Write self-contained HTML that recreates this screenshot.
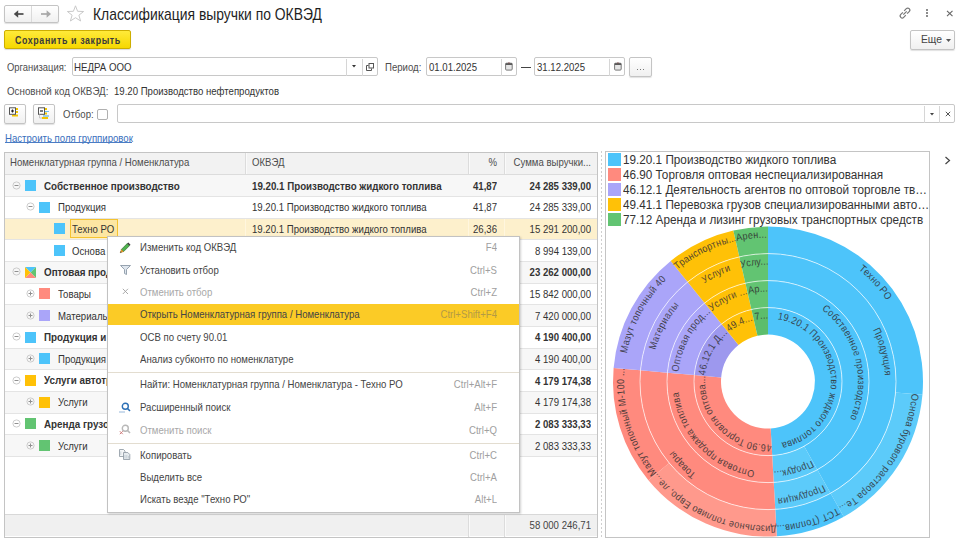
<!DOCTYPE html><html><head><meta charset="utf-8"><style>

*{box-sizing:border-box;margin:0;padding:0}
html,body{width:960px;height:541px;overflow:hidden;background:#fff}
body{position:relative;font-family:"Liberation Sans",sans-serif;font-size:9.6px;color:#333}
.a{position:absolute}
.t{position:absolute;white-space:nowrap;line-height:12px;transform-origin:0 0}
.btn{position:absolute;border:1px solid #c4c4c4;border-radius:2px;background:linear-gradient(#fff,#f0f0f0);box-shadow:0 1px 1px rgba(0,0,0,.12)}
.inp{position:absolute;border:1px solid #c8c8c8;border-radius:2px;background:#fff}
.vl{position:absolute;width:1px;background:#d0d0d0}
.chart{position:absolute;left:605px;top:151px}
.sq{position:absolute}
.exp{position:absolute;width:7px;height:7px;border:1px solid #b8b8b8;border-radius:50%}
.exp:after{content:"";position:absolute;left:1px;top:2px;width:3px;height:1px;background:#999}
.exp.plus:before{content:"";position:absolute;left:2px;top:1px;width:1px;height:3px;background:#999}

</style></head><body>
<div class="btn" style="left:4px;top:4.8px;width:54.8px;height:18.3px"></div>
<div class="vl" style="left:31px;top:6px;height:16px;background:#dadada"></div>
<svg class="a" style="left:12.5px;top:9px" width="12" height="10" viewBox="0 0 12 10"><path d="M4,5H10.5" stroke="#4a4a4a" stroke-width="1.7"/><path d="M0.8,5L5.2,1.2V8.8Z" fill="#4a4a4a"/></svg>
<svg class="a" style="left:39.5px;top:9px" width="12" height="10" viewBox="0 0 12 10"><path d="M1,5H7.5" stroke="#a8a8a8" stroke-width="1.7"/><path d="M11,5L6.6,1.2V8.8Z" fill="#a8a8a8"/></svg>
<svg class="a" style="left:66px;top:5px" width="19" height="17" viewBox="0 0 19 17"><path d="M9.5,0.8L11.6,6.3L17.6,6.5L12.9,10.2L14.6,16L9.5,12.7L4.4,16L6.1,10.2L1.4,6.5L7.4,6.3Z" fill="none" stroke="#c9c9c9" stroke-width="1"/></svg>
<div class="t " style="left:92.60px;top:8.56px;font-size:15.707px;color:#1e1e1e;transform:scaleX(0.8850);">Классификация выручки по ОКВЭД</div>
<svg class="a" style="left:898px;top:6px" width="14" height="14" viewBox="0 0 14 14"><g fill="none" stroke="#777" stroke-width="1.2"><path d="M6.2,4.8L8.3,2.7a2,2 0 0 1 2.9,2.9L9.1,7.7"/><path d="M7.8,9.2L5.7,11.3a2,2 0 0 1 -2.9,-2.9L4.9,6.3"/><path d="M5.3,8.7L8.7,5.3"/></g></svg>
<div class="a" style="left:926.3px;top:9.2px;width:2.2px;height:2.2px;background:#666;border-radius:1px"></div>
<div class="a" style="left:926.3px;top:12.2px;width:2.2px;height:2.2px;background:#666;border-radius:1px"></div>
<div class="a" style="left:926.3px;top:15.2px;width:2.2px;height:2.2px;background:#666;border-radius:1px"></div>
<svg class="a" style="left:946px;top:10px" width="8" height="7" viewBox="0 0 8 7"><path d="M1,0.8L6.5,6.2M6.5,0.8L1,6.2" stroke="#666" stroke-width="1.1"/></svg>
<div class="a" style="left:4px;top:30px;width:127px;height:19px;border:1px solid #cdae00;border-radius:2px;background:linear-gradient(#ffea3a,#f6d800);box-shadow:0 1px 1px rgba(0,0,0,.15)"></div>
<div class="t " style="left:14.60px;top:33.86px;font-size:10.800px;color:#3b3b3b;font-weight:bold;transform:scaleX(0.8200);letter-spacing:0.75px">Сохранить и закрыть</div>
<div class="btn" style="left:910px;top:30px;width:45.2px;height:19.6px"></div>
<div class="t " style="left:920.60px;top:33.11px;font-size:11.804px;color:#444;transform:scaleX(0.8726);">Еще</div>
<svg class="a" style="left:946px;top:39px" width="5" height="3" viewBox="0 0 5 3"><path d="M0,0H5L2.5,3Z" fill="#555"/></svg>
<div class="t " style="left:7.00px;top:60.96px;font-size:10.795px;color:#4d4d4d;transform:scaleX(0.8726);">Организация:</div>
<div class="inp" style="left:71.5px;top:57.4px;width:306px;height:18.8px"></div>
<div class="t " style="left:74.40px;top:60.85px;font-size:11.105px;color:#333;transform:scaleX(0.8726);">НЕДРА ООО</div>
<div class="vl" style="left:346px;top:58.5px;height:17px;background:#d6d6d6"></div>
<div class="vl" style="left:361.5px;top:58.5px;height:17px;background:#d6d6d6"></div>
<svg class="a" style="left:351.6px;top:64.8px" width="4" height="3" viewBox="0 0 4 3"><path d="M0,0H4L2,2.6Z" fill="#333"/></svg>
<svg class="a" style="left:366px;top:62.5px" width="8" height="8" viewBox="0 0 8 8"><g fill="none" stroke="#555" stroke-width="1"><rect x="3" y="0.5" width="4.5" height="4.5"/><path d="M2.5,2.5H0.5V7.5H5.5V5.5"/></g></svg>
<div class="t " style="left:385.20px;top:60.89px;font-size:11.002px;color:#4d4d4d;transform:scaleX(0.8726);">Период:</div>
<div class="inp" style="left:425.8px;top:57.4px;width:90.8px;height:18.8px"></div>
<div class="t " style="left:428.80px;top:60.89px;font-size:11.002px;color:#333;transform:scaleX(0.8726);">01.01.2025</div>
<div class="vl" style="left:500.5px;top:58.5px;height:17px;background:#d6d6d6"></div>
<svg class="a" style="left:504.7px;top:61.6px" width="8" height="9" viewBox="0 0 8 9"><rect x="0.6" y="1.2" width="6.6" height="6.9" rx="1" fill="#e6e6e6" stroke="#6a6a6a" stroke-width="0.9"/><rect x="0.6" y="1.2" width="6.6" height="1.8" fill="#5a5a5a"/><rect x="3.5" y="0.3" width="0.9" height="1.2" fill="#7a3030"/></svg>
<div class="inp" style="left:534.4px;top:57.4px;width:90.8px;height:18.8px"></div>
<div class="t " style="left:537.40px;top:60.89px;font-size:11.002px;color:#333;transform:scaleX(0.8726);">31.12.2025</div>
<div class="vl" style="left:609.3px;top:58.5px;height:17px;background:#d6d6d6"></div>
<svg class="a" style="left:613.5px;top:61.6px" width="8" height="9" viewBox="0 0 8 9"><rect x="0.6" y="1.2" width="6.6" height="6.9" rx="1" fill="#e6e6e6" stroke="#6a6a6a" stroke-width="0.9"/><rect x="0.6" y="1.2" width="6.6" height="1.8" fill="#5a5a5a"/><rect x="3.5" y="0.3" width="0.9" height="1.2" fill="#7a3030"/></svg>
<div class="a" style="left:520.8px;top:67px;width:9.8px;height:1.1px;background:#444"></div>
<div class="btn" style="left:629.2px;top:57.3px;width:22.5px;height:19.4px"></div>
<div class="a" style="left:637px;top:68.5px;width:1px;height:1px;background:#777"></div><div class="a" style="left:640px;top:68.5px;width:1px;height:1px;background:#777"></div><div class="a" style="left:643px;top:68.5px;width:1px;height:1px;background:#777"></div>
<div class="t " style="left:7.00px;top:84.81px;font-size:11.219px;color:#4d4d4d;transform:scaleX(0.8726);">Основной код ОКВЭД:</div>
<div class="t " style="left:113.75px;top:84.89px;font-size:11.002px;color:#333;transform:scaleX(0.8726);">19.20 Производство нефтепродуктов</div>
<div class="btn" style="left:4.3px;top:104.3px;width:21.4px;height:19.5px"></div>
<div class="btn" style="left:33.4px;top:104.3px;width:21.7px;height:19.5px"></div>
<svg class="a" style="left:8px;top:107px" width="14" height="12" viewBox="0 0 14 12"><rect x="4" y="1" width="6" height="2" fill="#f2c500"/><rect x="4" y="4" width="6" height="2" fill="#f2c500"/><rect x="4" y="7.5" width="6" height="2" fill="#f2c500"/><rect x="1.5" y="0.8" width="6" height="6.5" fill="#fff" stroke="#555" stroke-width="1"/><path d="M3,4H6M4.5,2.5V5.5" stroke="#222" stroke-width="1.2"/></svg>
<svg class="a" style="left:37px;top:107px" width="14" height="13" viewBox="0 0 14 13"><rect x="4" y="1" width="6" height="2" fill="#f2c500"/><rect x="6" y="4" width="6" height="1" fill="#6cc0ee"/><rect x="5" y="5.5" width="5" height="2" fill="#f2c500"/><rect x="6" y="8.5" width="6" height="1" fill="#3aa6e0"/><rect x="5" y="10" width="6" height="2" fill="#f2c500"/><rect x="1.5" y="0.8" width="6" height="6.5" fill="#fff" stroke="#555" stroke-width="1"/><path d="M3,4H6" stroke="#222" stroke-width="1.2"/><path d="M2.5,7.5V11H5" stroke="#bbb" stroke-width="0.8" fill="none"/></svg>
<div class="t " style="left:62.90px;top:108.29px;font-size:11.002px;color:#4d4d4d;transform:scaleX(0.8726);">Отбор:</div>
<div class="a" style="left:97.3px;top:109px;width:11px;height:11px;border:1px solid #b0b0b0;border-radius:2px;background:#fff"></div>
<div class="inp" style="left:117px;top:104.4px;width:838px;height:19.1px"></div>
<div class="vl" style="left:924px;top:105.5px;height:17px;background:#d6d6d6"></div>
<div class="vl" style="left:939px;top:105.5px;height:17px;background:#d6d6d6"></div>
<svg class="a" style="left:929.5px;top:112.5px" width="4" height="3" viewBox="0 0 4 3"><path d="M0,0H4L2,2.6Z" fill="#444"/></svg>
<svg class="a" style="left:944.5px;top:111px" width="6" height="6" viewBox="0 0 6 6"><path d="M0.8,0.8L5.2,5.2M5.2,0.8L0.8,5.2" stroke="#555" stroke-width="1"/></svg>
<div class="t " style="left:4.60px;top:131.69px;font-size:11.002px;color:#3a6fbd;transform:scaleX(0.8726);">Настроить поля группировок</div>
<div class="a" style="left:4.6px;top:142px;width:127.8px;height:1px;background:#4a7cc4"></div>
<div class="a" style="left:4px;top:151.5px;width:593.5px;height:386px;border:1px solid #c4c4c4;background:#fff"></div>
<div class="a" style="left:5px;top:152.5px;width:591.5px;height:22.3px;background:#f2f2f2"></div><div class="a" style="left:5px;top:174.33px;width:591.5px;height:1px;background:#dcdcdc"></div>
<div class="vl" style="left:244.5px;top:153px;height:21px;background:#dcdcdc"></div>
<div class="vl" style="left:245.5px;top:153px;height:21px;background:#fafafa"></div>
<div class="vl" style="left:467.5px;top:153px;height:21px;background:#dcdcdc"></div>
<div class="vl" style="left:468.5px;top:153px;height:21px;background:#fafafa"></div>
<div class="vl" style="left:503.5px;top:153px;height:21px;background:#dcdcdc"></div>
<div class="vl" style="left:504.5px;top:153px;height:21px;background:#fafafa"></div>
<div class="t " style="left:10.40px;top:156.29px;font-size:11.002px;color:#4d4d4d;transform:scaleX(0.8726);">Номенклатурная группа / Номенклатура</div>
<div class="t " style="left:251.80px;top:156.29px;font-size:11.002px;color:#4d4d4d;transform:scaleX(0.8726);">ОКВЭД</div>
<div class="t " style="left:97.00px;width:400px;text-align:right;top:156.29px;font-size:11.002px;color:#4d4d4d;transform:scaleX(0.8726);transform-origin:100% 0;">%</div>
<div class="t " style="left:190.50px;width:400px;text-align:right;top:156.29px;font-size:11.002px;color:#4d4d4d;transform:scaleX(0.8726);transform-origin:100% 0;">Сумма выручки...</div>
<div class="a" style="left:5px;top:174.83px;width:591.5px;height:21.66px;background:#f7f7f7"></div>
<div class="a" style="left:5px;top:196.49px;width:591.5px;height:21.66px;background:#fff"></div>
<div class="a" style="left:5px;top:218.15px;width:591.5px;height:21.66px;background:#fdf0cc"></div>
<div class="a" style="left:5px;top:239.81px;width:591.5px;height:21.66px;background:#fff"></div>
<div class="a" style="left:5px;top:261.47px;width:591.5px;height:21.66px;background:#f7f7f7"></div>
<div class="a" style="left:5px;top:283.13px;width:591.5px;height:21.66px;background:#fff"></div>
<div class="a" style="left:5px;top:304.79px;width:591.5px;height:21.66px;background:#f7f7f7"></div>
<div class="a" style="left:5px;top:326.45px;width:591.5px;height:21.66px;background:#fff"></div>
<div class="a" style="left:5px;top:348.11px;width:591.5px;height:21.66px;background:#f7f7f7"></div>
<div class="a" style="left:5px;top:369.77px;width:591.5px;height:21.66px;background:#fff"></div>
<div class="a" style="left:5px;top:391.43px;width:591.5px;height:21.66px;background:#f7f7f7"></div>
<div class="a" style="left:5px;top:413.09px;width:591.5px;height:21.66px;background:#fff"></div>
<div class="a" style="left:5px;top:434.75px;width:591.5px;height:21.66px;background:#f7f7f7"></div>
<div class="a" style="left:5px;top:195.99px;width:591.5px;height:1px;background:#e4e4e4"></div>
<div class="a" style="left:5px;top:217.65px;width:591.5px;height:1px;background:#e4e4e4"></div>
<div class="a" style="left:5px;top:239.31px;width:591.5px;height:1px;background:#e4e4e4"></div>
<div class="a" style="left:5px;top:260.97px;width:591.5px;height:1px;background:#e4e4e4"></div>
<div class="a" style="left:5px;top:282.63px;width:591.5px;height:1px;background:#e4e4e4"></div>
<div class="a" style="left:5px;top:304.29px;width:591.5px;height:1px;background:#e4e4e4"></div>
<div class="a" style="left:5px;top:325.95px;width:591.5px;height:1px;background:#e4e4e4"></div>
<div class="a" style="left:5px;top:347.61px;width:591.5px;height:1px;background:#e4e4e4"></div>
<div class="a" style="left:5px;top:369.27px;width:591.5px;height:1px;background:#e4e4e4"></div>
<div class="a" style="left:5px;top:390.93px;width:591.5px;height:1px;background:#e4e4e4"></div>
<div class="a" style="left:5px;top:412.59px;width:591.5px;height:1px;background:#e4e4e4"></div>
<div class="a" style="left:5px;top:434.25px;width:591.5px;height:1px;background:#e4e4e4"></div>
<div class="a" style="left:5px;top:455.91px;width:591.5px;height:1px;background:#e4e4e4"></div>
<svg class="a" style="left:12px;top:181px" width="9" height="9" viewBox="0 0 9 9"><circle cx="4.5" cy="4.5" r="3.6" fill="none" stroke="#c6c6c6" stroke-width="0.9"/><path d="M2.5,4.5H6.5" stroke="#909090" stroke-width="1"/></svg>
<div class="sq" style="left:25.00px;top:180.16px;width:11px;height:11px;background:#4dc4fa"></div>
<div class="t " style="left:44.30px;top:179.52px;font-size:11.277px;color:#333;font-weight:bold;transform:scaleX(0.8726);">Собственное производство</div>
<div class="t " style="left:252.30px;top:179.56px;font-size:11.162px;color:#333;font-weight:bold;transform:scaleX(0.8726);">19.20.1 Производство жидкого топлива</div>
<div class="t " style="left:97.00px;width:400px;text-align:right;top:179.62px;font-size:11.002px;color:#333;font-weight:bold;transform:scaleX(0.8726);transform-origin:100% 0;">41,87</div>
<div class="t " style="left:190.80px;width:400px;text-align:right;top:179.62px;font-size:11.002px;color:#333;font-weight:bold;transform:scaleX(0.8726);transform-origin:100% 0;">24 285 339,00</div>
<svg class="a" style="left:26px;top:202px" width="9" height="9" viewBox="0 0 9 9"><circle cx="4.5" cy="4.5" r="3.6" fill="none" stroke="#c6c6c6" stroke-width="0.9"/><path d="M2.5,4.5H6.5" stroke="#909090" stroke-width="1"/></svg>
<div class="sq" style="left:39.30px;top:201.82px;width:11px;height:11px;background:#4dc4fa"></div>
<div class="t " style="left:58.30px;top:201.28px;font-size:11.002px;color:#333;transform:scaleX(0.8726);">Продукция</div>
<div class="t " style="left:252.30px;top:201.27px;font-size:11.036px;color:#333;transform:scaleX(0.8726);">19.20.1 Производство жидкого топлива</div>
<div class="t " style="left:97.00px;width:400px;text-align:right;top:201.28px;font-size:11.002px;color:#333;transform:scaleX(0.8726);transform-origin:100% 0;">41,87</div>
<div class="t " style="left:190.80px;width:400px;text-align:right;top:201.28px;font-size:11.002px;color:#333;transform:scaleX(0.8726);transform-origin:100% 0;">24 285 339,00</div>
<div class="vl" style="left:245px;top:218.65px;height:20.66px;background:#fff6de"></div>
<div class="vl" style="left:468px;top:218.65px;height:20.66px;background:#fff6de"></div>
<div class="vl" style="left:504px;top:218.65px;height:20.66px;background:#fff6de"></div>
<div class="sq" style="left:53.60px;top:223.48px;width:11px;height:11px;background:#4dc4fa"></div>
<div class="a" style="left:69.7px;top:218.75px;width:48.8px;height:19.4px;border:1.5px solid #f5c330;background:#fde6a2"></div>
<div class="t " style="left:72.30px;top:222.94px;font-size:11.002px;color:#333;transform:scaleX(0.8726);">Техно РО</div>
<div class="t " style="left:252.30px;top:222.93px;font-size:11.036px;color:#333;transform:scaleX(0.8726);">19.20.1 Производство жидкого топлива</div>
<div class="t " style="left:97.00px;width:400px;text-align:right;top:222.94px;font-size:11.002px;color:#333;transform:scaleX(0.8726);transform-origin:100% 0;">26,36</div>
<div class="t " style="left:190.80px;width:400px;text-align:right;top:222.94px;font-size:11.002px;color:#333;transform:scaleX(0.8726);transform-origin:100% 0;">15 291 200,00</div>
<div class="sq" style="left:53.60px;top:245.14px;width:11px;height:11px;background:#4dc4fa"></div>
<div class="t " style="left:72.30px;top:244.60px;font-size:11.002px;color:#333;transform:scaleX(0.8726);">Основа бурового раствора Техно РО</div>
<div class="t " style="left:252.30px;top:244.59px;font-size:11.036px;color:#333;transform:scaleX(0.8726);">19.20.1 Производство жидкого топлива</div>
<div class="t " style="left:97.00px;width:400px;text-align:right;top:244.60px;font-size:11.002px;color:#333;transform:scaleX(0.8726);transform-origin:100% 0;">15,51</div>
<div class="t " style="left:190.80px;width:400px;text-align:right;top:244.60px;font-size:11.002px;color:#333;transform:scaleX(0.8726);transform-origin:100% 0;">8 994 139,00</div>
<svg class="a" style="left:12px;top:267px" width="9" height="9" viewBox="0 0 9 9"><circle cx="4.5" cy="4.5" r="3.6" fill="none" stroke="#c6c6c6" stroke-width="0.9"/><path d="M2.5,4.5H6.5" stroke="#909090" stroke-width="1"/></svg>
<svg class="a" style="left:25.00px;top:266.80px" width="11" height="11" viewBox="0 0 11 11"><path d="M0,0H11L5.5,5.5Z" fill="#4dc4fa"/><path d="M11,0V11L5.5,5.5Z" fill="#62c472"/><path d="M11,11H0L5.5,5.5Z" fill="#ff8a7e"/><path d="M0,11V0L5.5,5.5Z" fill="#ffc107"/></svg>
<div class="t " style="left:44.30px;top:266.16px;font-size:11.277px;color:#333;font-weight:bold;transform:scaleX(0.8726);">Оптовая продажа топлива</div>
<div class="t " style="left:97.00px;width:400px;text-align:right;top:266.26px;font-size:11.002px;color:#333;font-weight:bold;transform:scaleX(0.8726);transform-origin:100% 0;">40,11</div>
<div class="t " style="left:190.80px;width:400px;text-align:right;top:266.26px;font-size:11.002px;color:#333;font-weight:bold;transform:scaleX(0.8726);transform-origin:100% 0;">23 262 000,00</div>
<svg class="a" style="left:26px;top:289px" width="9" height="9" viewBox="0 0 9 9"><circle cx="4.5" cy="4.5" r="3.6" fill="none" stroke="#c6c6c6" stroke-width="0.9"/><path d="M2.5,4.5H6.5" stroke="#909090" stroke-width="1"/><path d="M4.5,2.5V6.5" stroke="#909090" stroke-width="1"/></svg>
<div class="sq" style="left:39.30px;top:288.46px;width:11px;height:11px;background:#ff8a7e"></div>
<div class="t " style="left:58.30px;top:287.92px;font-size:11.002px;color:#333;transform:scaleX(0.8726);">Товары</div>
<div class="t " style="left:252.30px;top:287.91px;font-size:11.036px;color:#333;transform:scaleX(0.8726);">46.90 Торговля оптовая неспециализированная</div>
<div class="t " style="left:97.00px;width:400px;text-align:right;top:287.92px;font-size:11.002px;color:#333;transform:scaleX(0.8726);transform-origin:100% 0;">27,31</div>
<div class="t " style="left:190.80px;width:400px;text-align:right;top:287.92px;font-size:11.002px;color:#333;transform:scaleX(0.8726);transform-origin:100% 0;">15 842 000,00</div>
<svg class="a" style="left:26px;top:311px" width="9" height="9" viewBox="0 0 9 9"><circle cx="4.5" cy="4.5" r="3.6" fill="none" stroke="#c6c6c6" stroke-width="0.9"/><path d="M2.5,4.5H6.5" stroke="#909090" stroke-width="1"/><path d="M4.5,2.5V6.5" stroke="#909090" stroke-width="1"/></svg>
<div class="sq" style="left:39.30px;top:310.12px;width:11px;height:11px;background:#aaa5f9"></div>
<div class="t " style="left:58.30px;top:309.58px;font-size:11.002px;color:#333;transform:scaleX(0.8726);">Материалы</div>
<div class="t " style="left:252.30px;top:309.57px;font-size:11.036px;color:#333;transform:scaleX(0.8726);">46.12.1 Деятельность агентов</div>
<div class="t " style="left:97.00px;width:400px;text-align:right;top:309.58px;font-size:11.002px;color:#333;transform:scaleX(0.8726);transform-origin:100% 0;">12,79</div>
<div class="t " style="left:190.80px;width:400px;text-align:right;top:309.58px;font-size:11.002px;color:#333;transform:scaleX(0.8726);transform-origin:100% 0;">7 420 000,00</div>
<svg class="a" style="left:12px;top:332px" width="9" height="9" viewBox="0 0 9 9"><circle cx="4.5" cy="4.5" r="3.6" fill="none" stroke="#c6c6c6" stroke-width="0.9"/><path d="M2.5,4.5H6.5" stroke="#909090" stroke-width="1"/></svg>
<div class="sq" style="left:25.00px;top:331.78px;width:11px;height:11px;background:#4dc4fa"></div>
<div class="t " style="left:44.30px;top:331.14px;font-size:11.277px;color:#333;font-weight:bold;transform:scaleX(0.8726);">Продукция и услуги</div>
<div class="t " style="left:252.30px;top:331.18px;font-size:11.162px;color:#333;font-weight:bold;transform:scaleX(0.8726);">19.20.1 Производство жидкого топлива</div>
<div class="t " style="left:97.00px;width:400px;text-align:right;top:331.24px;font-size:11.002px;color:#333;font-weight:bold;transform:scaleX(0.8726);transform-origin:100% 0;">7,22</div>
<div class="t " style="left:190.80px;width:400px;text-align:right;top:331.24px;font-size:11.002px;color:#333;font-weight:bold;transform:scaleX(0.8726);transform-origin:100% 0;">4 190 400,00</div>
<svg class="a" style="left:26px;top:354px" width="9" height="9" viewBox="0 0 9 9"><circle cx="4.5" cy="4.5" r="3.6" fill="none" stroke="#c6c6c6" stroke-width="0.9"/><path d="M2.5,4.5H6.5" stroke="#909090" stroke-width="1"/><path d="M4.5,2.5V6.5" stroke="#909090" stroke-width="1"/></svg>
<div class="sq" style="left:39.30px;top:353.44px;width:11px;height:11px;background:#4dc4fa"></div>
<div class="t " style="left:58.30px;top:352.90px;font-size:11.002px;color:#333;transform:scaleX(0.8726);">Продукция</div>
<div class="t " style="left:252.30px;top:352.89px;font-size:11.036px;color:#333;transform:scaleX(0.8726);">19.20.1 Производство жидкого топлива</div>
<div class="t " style="left:97.00px;width:400px;text-align:right;top:352.90px;font-size:11.002px;color:#333;transform:scaleX(0.8726);transform-origin:100% 0;">7,22</div>
<div class="t " style="left:190.80px;width:400px;text-align:right;top:352.90px;font-size:11.002px;color:#333;transform:scaleX(0.8726);transform-origin:100% 0;">4 190 400,00</div>
<svg class="a" style="left:12px;top:376px" width="9" height="9" viewBox="0 0 9 9"><circle cx="4.5" cy="4.5" r="3.6" fill="none" stroke="#c6c6c6" stroke-width="0.9"/><path d="M2.5,4.5H6.5" stroke="#909090" stroke-width="1"/></svg>
<div class="sq" style="left:25.00px;top:375.10px;width:11px;height:11px;background:#ffc107"></div>
<div class="t " style="left:44.30px;top:374.46px;font-size:11.277px;color:#333;font-weight:bold;transform:scaleX(0.8726);">Услуги автотранспорта</div>
<div class="t " style="left:252.30px;top:374.50px;font-size:11.162px;color:#333;font-weight:bold;transform:scaleX(0.8726);">49.41.1 Перевозка грузов</div>
<div class="t " style="left:97.00px;width:400px;text-align:right;top:374.56px;font-size:11.002px;color:#333;font-weight:bold;transform:scaleX(0.8726);transform-origin:100% 0;">7,21</div>
<div class="t " style="left:190.80px;width:400px;text-align:right;top:374.56px;font-size:11.002px;color:#333;font-weight:bold;transform:scaleX(0.8726);transform-origin:100% 0;">4 179 174,38</div>
<svg class="a" style="left:26px;top:397px" width="9" height="9" viewBox="0 0 9 9"><circle cx="4.5" cy="4.5" r="3.6" fill="none" stroke="#c6c6c6" stroke-width="0.9"/><path d="M2.5,4.5H6.5" stroke="#909090" stroke-width="1"/><path d="M4.5,2.5V6.5" stroke="#909090" stroke-width="1"/></svg>
<div class="sq" style="left:39.30px;top:396.76px;width:11px;height:11px;background:#ffc107"></div>
<div class="t " style="left:58.30px;top:396.22px;font-size:11.002px;color:#333;transform:scaleX(0.8726);">Услуги</div>
<div class="t " style="left:252.30px;top:396.21px;font-size:11.036px;color:#333;transform:scaleX(0.8726);">49.41.1 Перевозка грузов</div>
<div class="t " style="left:97.00px;width:400px;text-align:right;top:396.22px;font-size:11.002px;color:#333;transform:scaleX(0.8726);transform-origin:100% 0;">7,21</div>
<div class="t " style="left:190.80px;width:400px;text-align:right;top:396.22px;font-size:11.002px;color:#333;transform:scaleX(0.8726);transform-origin:100% 0;">4 179 174,38</div>
<svg class="a" style="left:12px;top:419px" width="9" height="9" viewBox="0 0 9 9"><circle cx="4.5" cy="4.5" r="3.6" fill="none" stroke="#c6c6c6" stroke-width="0.9"/><path d="M2.5,4.5H6.5" stroke="#909090" stroke-width="1"/></svg>
<div class="sq" style="left:25.00px;top:418.42px;width:11px;height:11px;background:#62c472"></div>
<div class="t " style="left:44.30px;top:417.78px;font-size:11.277px;color:#333;font-weight:bold;transform:scaleX(0.8726);">Аренда грузового транспорта</div>
<div class="t " style="left:252.30px;top:417.82px;font-size:11.162px;color:#333;font-weight:bold;transform:scaleX(0.8726);">77.12 Аренда и лизинг</div>
<div class="t " style="left:97.00px;width:400px;text-align:right;top:417.88px;font-size:11.002px;color:#333;font-weight:bold;transform:scaleX(0.8726);transform-origin:100% 0;">3,59</div>
<div class="t " style="left:190.80px;width:400px;text-align:right;top:417.88px;font-size:11.002px;color:#333;font-weight:bold;transform:scaleX(0.8726);transform-origin:100% 0;">2 083 333,33</div>
<svg class="a" style="left:26px;top:441px" width="9" height="9" viewBox="0 0 9 9"><circle cx="4.5" cy="4.5" r="3.6" fill="none" stroke="#c6c6c6" stroke-width="0.9"/><path d="M2.5,4.5H6.5" stroke="#909090" stroke-width="1"/><path d="M4.5,2.5V6.5" stroke="#909090" stroke-width="1"/></svg>
<div class="sq" style="left:39.30px;top:440.08px;width:11px;height:11px;background:#62c472"></div>
<div class="t " style="left:58.30px;top:439.54px;font-size:11.002px;color:#333;transform:scaleX(0.8726);">Услуги</div>
<div class="t " style="left:252.30px;top:439.53px;font-size:11.036px;color:#333;transform:scaleX(0.8726);">77.12 Аренда и лизинг</div>
<div class="t " style="left:97.00px;width:400px;text-align:right;top:439.54px;font-size:11.002px;color:#333;transform:scaleX(0.8726);transform-origin:100% 0;">3,59</div>
<div class="t " style="left:190.80px;width:400px;text-align:right;top:439.54px;font-size:11.002px;color:#333;transform:scaleX(0.8726);transform-origin:100% 0;">2 083 333,33</div>
<div class="a" style="left:5px;top:514px;width:591.5px;height:22.3px;background:#f0f0f0;border-top:1px solid #d8d8d8"></div>
<div class="vl" style="left:467.5px;top:515px;height:21.5px;background:#dcdcdc"></div>
<div class="vl" style="left:468.5px;top:515px;height:21.5px;background:#fafafa"></div>
<div class="vl" style="left:503.5px;top:515px;height:21.5px;background:#dcdcdc"></div>
<div class="vl" style="left:504.5px;top:515px;height:21.5px;background:#fafafa"></div>
<div class="t " style="left:191.00px;width:400px;text-align:right;top:518.99px;font-size:11.002px;color:#444;transform:scaleX(0.8726);transform-origin:100% 0;">58 000 246,71</div>
<div class="a" style="left:601px;top:151px;width:1px;height:387px;background-image:linear-gradient(#cfcfcf 50%,transparent 50%);background-size:1px 4px"></div>
<div class="a" style="left:605.2px;top:151.1px;width:324.5px;height:386.7px;border:1px solid #c4c4c4;background:#fff"></div>
<svg class="chart" width="325" height="387" viewBox="605 151 325 387"><path d="M768.00,307.60A74,74 0 0 1 772.20,455.48L770.67,428.52A47,47 0 0 0 768.00,334.60Z" fill="#4dc4fa"/><path d="M772.20,455.48A74,74 0 0 1 694.29,375.05L721.18,377.44A47,47 0 0 0 770.67,428.52Z" fill="#ff8a7e"/><path d="M694.29,375.05A74,74 0 0 1 721.56,323.99L738.50,345.01A47,47 0 0 0 721.18,377.44Z" fill="#9d98ee"/><path d="M721.56,323.99A74,74 0 0 1 751.44,309.48L757.48,335.79A47,47 0 0 0 738.50,345.01Z" fill="#ffc107"/><path d="M751.44,309.48A74,74 0 0 1 768.00,307.60L768.00,334.60A47,47 0 0 0 757.48,335.79Z" fill="#5cbd6c"/><path d="M768.00,280.60A101,101 0 0 1 817.37,469.71L804.17,446.16A74,74 0 0 0 768.00,307.60Z" fill="#4dc4fa"/><path d="M817.37,469.71A101,101 0 0 1 773.73,482.44L772.20,455.48A74,74 0 0 0 804.17,446.16Z" fill="#5ccbfa"/><path d="M773.73,482.44A101,101 0 0 1 667.40,372.67L694.29,375.05A74,74 0 0 0 772.20,455.48Z" fill="#ff8a7e"/><path d="M667.40,372.67A101,101 0 0 1 704.62,302.96L721.56,323.99A74,74 0 0 0 694.29,375.05Z" fill="#aaa5f9"/><path d="M704.62,302.96A101,101 0 0 1 745.40,283.16L751.44,309.48A74,74 0 0 0 721.56,323.99Z" fill="#ffc107"/><path d="M745.40,283.16A101,101 0 0 1 768.00,280.60L768.00,307.60A74,74 0 0 0 751.44,309.48Z" fill="#62c472"/><path d="M768.00,253.60A128,128 0 0 1 830.57,493.26L817.37,469.71A101,101 0 0 0 768.00,280.60Z" fill="#4dc4fa"/><path d="M830.57,493.26A128,128 0 0 1 775.27,509.39L773.73,482.44A101,101 0 0 0 817.37,469.71Z" fill="#5ccbfa"/><path d="M775.27,509.39A128,128 0 0 1 640.50,370.28L667.40,372.67A101,101 0 0 0 773.73,482.44Z" fill="#ff8a7e"/><path d="M640.50,370.28A128,128 0 0 1 687.67,281.94L704.62,302.96A101,101 0 0 0 667.40,372.67Z" fill="#aaa5f9"/><path d="M687.67,281.94A128,128 0 0 1 739.36,256.85L745.40,283.16A101,101 0 0 0 704.62,302.96Z" fill="#ffc107"/><path d="M739.36,256.85A128,128 0 0 1 768.00,253.60L768.00,280.60A101,101 0 0 0 745.40,283.16Z" fill="#62c472"/><path d="M768.00,226.60A155,155 0 0 1 922.43,394.87L895.53,392.56A128,128 0 0 0 768.00,253.60Z" fill="#4dc4fa"/><path d="M922.43,394.87A155,155 0 0 1 843.77,516.82L830.57,493.26A128,128 0 0 0 895.53,392.56Z" fill="#5ccbfa"/><path d="M843.77,516.82A155,155 0 0 1 776.80,536.35L775.27,509.39A128,128 0 0 0 830.57,493.26Z" fill="#4dc4fa"/><path d="M776.80,536.35A155,155 0 0 1 648.40,480.19L669.23,463.02A128,128 0 0 0 775.27,509.39Z" fill="#ff998c"/><path d="M648.40,480.19A155,155 0 0 1 613.61,367.89L640.50,370.28A128,128 0 0 0 669.23,463.02Z" fill="#ff8a7e"/><path d="M613.61,367.89A155,155 0 0 1 670.73,260.92L687.67,281.94A128,128 0 0 0 640.50,370.28Z" fill="#aaa5f9"/><path d="M670.73,260.92A155,155 0 0 1 733.31,230.53L739.36,256.85A128,128 0 0 0 687.67,281.94Z" fill="#ffc107"/><path d="M733.31,230.53A155,155 0 0 1 768.00,226.60L768.00,253.60A128,128 0 0 0 739.36,256.85Z" fill="#62c472"/><circle cx="768" cy="381.6" r="74" fill="none" stroke="#fff" stroke-width="1" stroke-opacity="0.65"/><circle cx="768" cy="381.6" r="101" fill="none" stroke="#fff" stroke-width="1" stroke-opacity="0.65"/><circle cx="768" cy="381.6" r="128" fill="none" stroke="#fff" stroke-width="1" stroke-opacity="0.65"/><g fill="#333" font-family="Liberation Sans, sans-serif" font-size="10.200" text-anchor="middle"><g stroke="#4dc4fa" stroke-width="0.1"><text transform="translate(779.95,319.79) rotate(10.94) scale(0.8800,1)">1</text><text transform="translate(785.12,321.02) rotate(15.78) scale(0.8800,1)">9</text><text transform="translate(789.00,322.25) rotate(19.47) scale(0.8800,1)">.</text><text transform="translate(792.72,323.70) rotate(23.11) scale(0.8800,1)">2</text><text transform="translate(797.55,326.00) rotate(27.97) scale(0.8800,1)">0</text><text transform="translate(801.06,328.02) rotate(31.66) scale(0.8800,1)">.</text><text transform="translate(804.40,330.22) rotate(35.30) scale(0.8800,1)">1</text><text transform="translate(811.22,335.81) rotate(43.33) scale(0.8800,1)">П</text><text transform="translate(815.49,340.25) rotate(48.92) scale(0.8800,1)">р</text><text transform="translate(818.83,344.42) rotate(53.79) scale(0.8800,1)">о</text><text transform="translate(821.82,348.90) rotate(58.69) scale(0.8800,1)">и</text><text transform="translate(824.20,353.18) rotate(63.14) scale(0.8800,1)">з</text><text transform="translate(826.16,357.43) rotate(67.40) scale(0.8800,1)">в</text><text transform="translate(827.93,362.24) rotate(72.06) scale(0.8800,1)">о</text><text transform="translate(829.36,367.37) rotate(76.91) scale(0.8800,1)">д</text><text transform="translate(830.34,372.55) rotate(81.70) scale(0.8800,1)">с</text><text transform="translate(830.83,377.11) rotate(85.88) scale(0.8800,1)">т</text><text transform="translate(830.98,381.70) rotate(90.41) scale(0.8800,1)">в</text><text transform="translate(830.74,386.83) rotate(95.09) scale(0.8800,1)">о</text><text transform="translate(829.40,395.31) rotate(102.90) scale(0.8800,1)">ж</text><text transform="translate(827.80,401.02) rotate(108.29) scale(0.8800,1)">и</text><text transform="translate(825.85,406.15) rotate(113.29) scale(0.8800,1)">д</text><text transform="translate(823.71,410.63) rotate(117.80) scale(0.8800,1)">к</text><text transform="translate(821.28,414.85) rotate(122.24) scale(0.8800,1)">о</text><text transform="translate(818.85,418.42) rotate(126.16) scale(0.8800,1)">г</text><text transform="translate(816.17,421.82) rotate(130.10) scale(0.8800,1)">о</text><text transform="translate(810.99,427.28) rotate(136.95) scale(0.8800,1)">т</text><text transform="translate(807.34,430.44) rotate(141.34) scale(0.8800,1)">о</text><text transform="translate(803.08,433.56) rotate(146.15) scale(0.8800,1)">п</text><text transform="translate(798.43,436.40) rotate(151.10) scale(0.8800,1)">л</text><text transform="translate(793.55,438.82) rotate(156.06) scale(0.8800,1)">и</text><text transform="translate(788.67,440.75) rotate(160.84) scale(0.8800,1)">в</text><text transform="translate(783.73,442.24) rotate(165.53) scale(0.8800,1)">а</text></g><g stroke="#ff8a7e" stroke-width="0.1"><text transform="translate(768.97,444.59) rotate(179.12) scale(0.8800,1)">4</text><text transform="translate(763.60,444.44) rotate(-175.99) scale(0.8800,1)">6</text><text transform="translate(759.60,444.03) rotate(-172.34) scale(0.8800,1)">.</text><text transform="translate(755.65,443.37) rotate(-168.69) scale(0.8800,1)">9</text><text transform="translate(750.42,442.09) rotate(-163.80) scale(0.8800,1)">0</text><text transform="translate(742.99,439.42) rotate(-156.61) scale(0.8800,1)">Т</text><text transform="translate(738.23,437.12) rotate(-151.80) scale(0.8800,1)">о</text><text transform="translate(733.64,434.40) rotate(-146.95) scale(0.8800,1)">р</text><text transform="translate(730.10,431.92) rotate(-143.02) scale(0.8800,1)">г</text><text transform="translate(726.70,429.17) rotate(-139.04) scale(0.8800,1)">о</text><text transform="translate(723.03,425.71) rotate(-134.45) scale(0.8800,1)">в</text><text transform="translate(719.57,421.89) rotate(-129.78) scale(0.8800,1)">л</text><text transform="translate(716.26,417.54) rotate(-124.80) scale(0.8800,1)">я</text><text transform="translate(712.16,410.78) rotate(-117.60) scale(0.8800,1)">о</text><text transform="translate(709.88,405.93) rotate(-112.73) scale(0.8800,1)">п</text><text transform="translate(708.23,401.52) rotate(-108.45) scale(0.8800,1)">т</text><text transform="translate(706.87,396.87) rotate(-104.05) scale(0.8800,1)">о</text><text transform="translate(705.82,391.78) rotate(-99.31) scale(0.8800,1)">в</text><text transform="translate(705.19,386.64) rotate(-94.61) scale(0.8800,1)">а</text><text transform="translate(705.00,382.62) rotate(-90.94) scale(0.8800,1)">.</text><text transform="translate(705.01,379.94) rotate(-88.50) scale(0.8800,1)">.</text><text transform="translate(705.14,377.26) rotate(-86.06) scale(0.8800,1)">.</text></g><g stroke="#9d98ee" stroke-width="0.1"><text transform="translate(705.55,372.96) rotate(-82.02) scale(0.8800,1)">4</text><text transform="translate(706.53,367.65) rotate(-77.11) scale(0.8800,1)">6</text><text transform="translate(707.54,363.81) rotate(-73.49) scale(0.8800,1)">.</text><text transform="translate(708.81,359.97) rotate(-69.81) scale(0.8800,1)">1</text><text transform="translate(710.88,355.02) rotate(-64.93) scale(0.8800,1)">2</text><text transform="translate(712.65,351.52) rotate(-61.33) scale(0.8800,1)">.</text><text transform="translate(714.64,348.13) rotate(-57.75) scale(0.8800,1)">1</text><text transform="translate(719.75,341.14) rotate(-49.87) scale(0.8800,1)">Д</text><text transform="translate(722.81,337.77) rotate(-45.73) scale(0.8800,1)">.</text><text transform="translate(724.73,335.88) rotate(-43.28) scale(0.8800,1)">.</text><text transform="translate(726.75,334.06) rotate(-40.81) scale(0.8800,1)">.</text></g><g stroke="#ffc107" stroke-width="0.1"><text transform="translate(731.22,330.48) rotate(-35.86) scale(0.8800,1)">4</text><text transform="translate(735.75,327.50) rotate(-30.92) scale(0.8800,1)">9</text><text transform="translate(739.21,325.57) rotate(-27.32) scale(0.8800,1)">.</text><text transform="translate(742.74,323.90) rotate(-23.40) scale(0.8800,1)">4</text><text transform="translate(746.45,322.43) rotate(-19.78) scale(0.8800,1)">.</text><text transform="translate(749.02,321.57) rotate(-17.31) scale(0.8800,1)">.</text><text transform="translate(751.63,320.82) rotate(-14.84) scale(0.8800,1)">.</text></g><g stroke="#5cbd6c" stroke-width="0.1"><text transform="translate(757.67,319.46) rotate(-9.59) scale(0.8800,1)">7</text><text transform="translate(761.55,318.93) rotate(-6.33) scale(0.8800,1)">.</text><text transform="translate(764.15,318.69) rotate(-3.95) scale(0.8800,1)">.</text><text transform="translate(766.81,318.56) rotate(-1.54) scale(0.8800,1)">.</text></g><g stroke="#4dc4fa" stroke-width="0.1"><text transform="translate(824.16,311.53) rotate(38.54) scale(0.8800,1)">С</text><text transform="translate(828.82,315.51) rotate(42.44) scale(0.8800,1)">о</text><text transform="translate(832.71,319.29) rotate(45.90) scale(0.8800,1)">б</text><text transform="translate(836.16,323.06) rotate(49.15) scale(0.8800,1)">с</text><text transform="translate(839.07,326.60) rotate(52.07) scale(0.8800,1)">т</text><text transform="translate(841.87,330.40) rotate(55.07) scale(0.8800,1)">в</text><text transform="translate(844.74,334.78) rotate(58.41) scale(0.8800,1)">е</text><text transform="translate(847.40,339.39) rotate(61.79) scale(0.8800,1)">н</text><text transform="translate(849.74,344.09) rotate(65.14) scale(0.8800,1)">н</text><text transform="translate(851.88,349.09) rotate(68.60) scale(0.8800,1)">о</text><text transform="translate(853.68,354.12) rotate(72.00) scale(0.8800,1)">е</text><text transform="translate(855.74,361.60) rotate(77.28) scale(0.8800,1)">п</text><text transform="translate(856.74,366.73) rotate(80.60) scale(0.8800,1)">р</text><text transform="translate(857.47,372.09) rotate(84.05) scale(0.8800,1)">о</text><text transform="translate(857.86,377.45) rotate(87.47) scale(0.8800,1)">и</text><text transform="translate(857.95,382.29) rotate(90.55) scale(0.8800,1)">з</text><text transform="translate(857.78,387.01) rotate(93.56) scale(0.8800,1)">в</text><text transform="translate(857.31,392.15) rotate(96.84) scale(0.8800,1)">о</text><text transform="translate(856.52,397.41) rotate(100.23) scale(0.8800,1)">д</text><text transform="translate(855.45,402.50) rotate(103.54) scale(0.8800,1)">с</text><text transform="translate(854.25,406.98) rotate(106.50) scale(0.8800,1)">т</text><text transform="translate(852.78,411.48) rotate(109.51) scale(0.8800,1)">в</text><text transform="translate(850.92,416.30) rotate(112.80) scale(0.8800,1)">о</text></g><g stroke="#5ccbfa" stroke-width="0.1"><text transform="translate(808.74,461.91) rotate(153.26) scale(0.8800,1)">П</text><text transform="translate(803.06,464.52) rotate(157.24) scale(0.8800,1)">р</text><text transform="translate(798.18,466.41) rotate(160.57) scale(0.8800,1)">о</text><text transform="translate(793.17,468.01) rotate(163.69) scale(0.8800,1)">д</text><text transform="translate(788.25,469.30) rotate(166.93) scale(0.8800,1)">у</text><text transform="translate(783.85,470.20) rotate(169.80) scale(0.8800,1)">к</text><text transform="translate(780.40,470.76) rotate(172.02) scale(0.8800,1)">.</text><text transform="translate(777.68,471.10) rotate(173.76) scale(0.8800,1)">.</text><text transform="translate(775.05,471.34) rotate(175.45) scale(0.8800,1)">.</text></g><g stroke="#ff8a7e" stroke-width="0.1"><text transform="translate(751.24,469.99) rotate(-169.29) scale(0.8800,1)">О</text><text transform="translate(745.03,468.59) rotate(-165.24) scale(0.8800,1)">п</text><text transform="translate(740.43,467.25) rotate(-162.19) scale(0.8800,1)">т</text><text transform="translate(735.88,465.65) rotate(-159.12) scale(0.8800,1)">о</text><text transform="translate(731.15,463.69) rotate(-155.86) scale(0.8800,1)">в</text><text transform="translate(726.42,461.40) rotate(-152.51) scale(0.8800,1)">а</text><text transform="translate(721.79,458.81) rotate(-149.13) scale(0.8800,1)">я</text><text transform="translate(715.28,454.53) rotate(-144.17) scale(0.8800,1)">п</text><text transform="translate(711.01,451.24) rotate(-140.74) scale(0.8800,1)">р</text><text transform="translate(707.05,447.81) rotate(-137.40) scale(0.8800,1)">о</text><text transform="translate(703.29,444.15) rotate(-133.97) scale(0.8800,1)">д</text><text transform="translate(699.68,440.18) rotate(-130.56) scale(0.8800,1)">а</text><text transform="translate(695.99,435.57) rotate(-126.80) scale(0.8800,1)">ж</text><text transform="translate(692.57,430.67) rotate(-122.99) scale(0.8800,1)">а</text><text transform="translate(688.80,424.29) rotate(-118.27) scale(0.8800,1)">т</text><text transform="translate(686.61,419.94) rotate(-115.17) scale(0.8800,1)">о</text><text transform="translate(684.48,415.05) rotate(-111.78) scale(0.8800,1)">п</text><text transform="translate(682.64,410.01) rotate(-108.36) scale(0.8800,1)">л</text><text transform="translate(681.07,404.74) rotate(-104.86) scale(0.8800,1)">и</text><text transform="translate(679.88,399.64) rotate(-101.52) scale(0.8800,1)">в</text><text transform="translate(678.99,394.55) rotate(-98.23) scale(0.8800,1)">а</text></g><g stroke="#aaa5f9" stroke-width="0.1"><text transform="translate(678.97,368.64) rotate(-81.77) scale(0.8800,1)">О</text><text transform="translate(680.11,362.35) rotate(-77.69) scale(0.8800,1)">п</text><text transform="translate(681.23,357.76) rotate(-74.68) scale(0.8800,1)">т</text><text transform="translate(682.62,353.18) rotate(-71.64) scale(0.8800,1)">о</text><text transform="translate(684.43,348.23) rotate(-68.28) scale(0.8800,1)">в</text><text transform="translate(686.48,343.49) rotate(-64.99) scale(0.8800,1)">а</text><text transform="translate(688.79,338.88) rotate(-61.64) scale(0.8800,1)">я</text><text transform="translate(692.77,332.21) rotate(-56.70) scale(0.8800,1)">п</text><text transform="translate(695.83,327.84) rotate(-53.30) scale(0.8800,1)">р</text><text transform="translate(699.10,323.71) rotate(-49.95) scale(0.8800,1)">о</text><text transform="translate(702.64,319.74) rotate(-46.56) scale(0.8800,1)">д</text><text transform="translate(705.57,316.79) rotate(-43.91) scale(0.8800,1)">.</text><text transform="translate(707.55,314.94) rotate(-42.18) scale(0.8800,1)">.</text><text transform="translate(709.60,313.14) rotate(-40.44) scale(0.8800,1)">.</text></g><g stroke="#ffc107" stroke-width="0.1"><text transform="translate(714.05,309.64) rotate(-37.04) scale(0.8800,1)">У</text><text transform="translate(718.30,306.62) rotate(-33.72) scale(0.8800,1)">с</text><text transform="translate(722.74,303.84) rotate(-30.39) scale(0.8800,1)">л</text><text transform="translate(727.23,301.37) rotate(-27.12) scale(0.8800,1)">у</text><text transform="translate(730.87,299.62) rotate(-24.29) scale(0.8800,1)">г</text><text transform="translate(734.90,297.92) rotate(-21.50) scale(0.8800,1)">и</text><text transform="translate(741.27,295.68) rotate(-17.20) scale(0.8800,1)">.</text><text transform="translate(743.90,294.91) rotate(-15.46) scale(0.8800,1)">.</text><text transform="translate(746.44,294.25) rotate(-13.79) scale(0.8800,1)">.</text></g><g stroke="#62c472" stroke-width="0.1"><text transform="translate(751.63,293.10) rotate(-10.45) scale(0.8800,1)">А</text><text transform="translate(757.34,292.23) rotate(-6.77) scale(0.8800,1)">р</text><text transform="translate(761.22,291.84) rotate(-4.51) scale(0.8800,1)">.</text><text transform="translate(763.85,291.67) rotate(-2.83) scale(0.8800,1)">.</text><text transform="translate(766.52,291.58) rotate(-1.13) scale(0.8800,1)">.</text></g><g stroke="#4dc4fa" stroke-width="0.1"><text transform="translate(874.35,332.75) rotate(65.42) scale(0.8800,1)">П</text><text transform="translate(876.77,338.41) rotate(68.43) scale(0.8800,1)">р</text><text transform="translate(878.58,343.31) rotate(70.98) scale(0.8800,1)">о</text><text transform="translate(880.21,348.44) rotate(73.62) scale(0.8800,1)">д</text><text transform="translate(881.56,353.38) rotate(75.91) scale(0.8800,1)">у</text><text transform="translate(882.55,357.68) rotate(78.07) scale(0.8800,1)">к</text><text transform="translate(883.45,362.42) rotate(80.43) scale(0.8800,1)">ц</text><text transform="translate(884.23,367.85) rotate(83.12) scale(0.8800,1)">и</text><text transform="translate(884.76,373.23) rotate(85.77) scale(0.8800,1)">я</text></g><g stroke="#5ccbfa" stroke-width="0.1"><text transform="translate(820.27,486.33) rotate(153.60) scale(0.8800,1)">П</text><text transform="translate(814.68,488.92) rotate(156.62) scale(0.8800,1)">р</text><text transform="translate(809.86,490.88) rotate(159.17) scale(0.8800,1)">о</text><text transform="translate(804.77,492.68) rotate(161.81) scale(0.8800,1)">д</text><text transform="translate(799.86,494.18) rotate(164.27) scale(0.8800,1)">у</text><text transform="translate(795.60,495.29) rotate(166.42) scale(0.8800,1)">к</text><text transform="translate(790.89,496.33) rotate(168.78) scale(0.8800,1)">ц</text><text transform="translate(785.50,497.27) rotate(171.47) scale(0.8800,1)">и</text><text transform="translate(780.13,497.94) rotate(174.12) scale(0.8800,1)">я</text></g><g stroke="#ff8a7e" stroke-width="0.1"><text transform="translate(694.21,472.37) rotate(-140.96) scale(0.8800,1)">Т</text><text transform="translate(690.20,468.97) rotate(-138.38) scale(0.8800,1)">о</text><text transform="translate(686.46,465.50) rotate(-135.88) scale(0.8800,1)">в</text><text transform="translate(682.93,461.91) rotate(-133.26) scale(0.8800,1)">а</text><text transform="translate(679.42,458.02) rotate(-130.69) scale(0.8800,1)">р</text><text transform="translate(675.55,453.27) rotate(-127.69) scale(0.8800,1)">ы</text></g><g stroke="#aaa5f9" stroke-width="0.1"><text transform="translate(656.38,346.54) rotate(-72.56) scale(0.8800,1)">М</text><text transform="translate(658.59,340.15) rotate(-69.25) scale(0.8800,1)">а</text><text transform="translate(660.36,335.74) rotate(-66.92) scale(0.8800,1)">т</text><text transform="translate(662.33,331.37) rotate(-64.58) scale(0.8800,1)">е</text><text transform="translate(664.67,326.71) rotate(-62.02) scale(0.8800,1)">р</text><text transform="translate(667.27,322.09) rotate(-59.37) scale(0.8800,1)">и</text><text transform="translate(670.13,317.51) rotate(-56.73) scale(0.8800,1)">а</text><text transform="translate(673.21,313.03) rotate(-54.07) scale(0.8800,1)">л</text><text transform="translate(677.03,308.05) rotate(-50.99) scale(0.8800,1)">ы</text></g><g stroke="#ffc107" stroke-width="0.1"><text transform="translate(706.73,281.93) rotate(-31.61) scale(0.8800,1)">У</text><text transform="translate(711.17,279.33) rotate(-29.08) scale(0.8800,1)">с</text><text transform="translate(715.76,276.91) rotate(-26.54) scale(0.8800,1)">л</text><text transform="translate(720.35,274.73) rotate(-24.22) scale(0.8800,1)">у</text><text transform="translate(724.11,273.11) rotate(-22.21) scale(0.8800,1)">г</text><text transform="translate(728.24,271.51) rotate(-20.04) scale(0.8800,1)">и</text></g><g stroke="#62c472" stroke-width="0.1"><text transform="translate(743.84,267.08) rotate(-11.74) scale(0.8800,1)">У</text><text transform="translate(748.91,266.15) rotate(-9.21) scale(0.8800,1)">с</text><text transform="translate(754.04,265.43) rotate(-6.68) scale(0.8800,1)">л</text><text transform="translate(758.62,264.96) rotate(-4.77) scale(0.8800,1)">у</text><text transform="translate(761.83,264.74) rotate(-3.20) scale(0.8800,1)">.</text><text transform="translate(764.48,264.62) rotate(-1.89) scale(0.8800,1)">.</text><text transform="translate(767.16,264.56) rotate(-0.58) scale(0.8800,1)">.</text></g><g stroke="#4dc4fa" stroke-width="0.1"><text transform="translate(860.66,271.34) rotate(40.11) scale(0.8800,1)">Т</text><text transform="translate(864.56,274.75) rotate(42.17) scale(0.8800,1)">е</text><text transform="translate(868.21,278.18) rotate(44.16) scale(0.8800,1)">х</text><text transform="translate(871.77,281.76) rotate(46.17) scale(0.8800,1)">н</text><text transform="translate(875.35,285.62) rotate(48.21) scale(0.8800,1)">о</text><text transform="translate(880.78,292.07) rotate(51.57) scale(0.8800,1)">Р</text><text transform="translate(884.90,297.52) rotate(54.29) scale(0.8800,1)">О</text></g><g stroke="#5ccbfa" stroke-width="0.1"><text transform="translate(911.36,397.06) rotate(96.30) scale(0.8800,1)">О</text><text transform="translate(910.55,403.17) rotate(98.75) scale(0.8800,1)">с</text><text transform="translate(909.70,408.13) rotate(100.76) scale(0.8800,1)">н</text><text transform="translate(908.60,413.36) rotate(102.89) scale(0.8800,1)">о</text><text transform="translate(907.36,418.39) rotate(104.95) scale(0.8800,1)">в</text><text transform="translate(905.94,423.33) rotate(106.99) scale(0.8800,1)">а</text><text transform="translate(903.38,430.95) rotate(110.19) scale(0.8800,1)">б</text><text transform="translate(901.58,435.59) rotate(112.17) scale(0.8800,1)">у</text><text transform="translate(899.57,440.30) rotate(114.21) scale(0.8800,1)">р</text><text transform="translate(897.24,445.22) rotate(116.37) scale(0.8800,1)">о</text><text transform="translate(894.85,449.83) rotate(118.44) scale(0.8800,1)">в</text><text transform="translate(892.33,454.29) rotate(120.48) scale(0.8800,1)">о</text><text transform="translate(890.13,457.91) rotate(122.16) scale(0.8800,1)">г</text><text transform="translate(887.83,461.45) rotate(123.70) scale(0.8800,1)">о</text><text transform="translate(883.20,467.99) rotate(126.89) scale(0.8800,1)">р</text><text transform="translate(879.91,472.21) rotate(129.02) scale(0.8800,1)">а</text><text transform="translate(876.66,476.08) rotate(131.03) scale(0.8800,1)">с</text><text transform="translate(873.56,479.53) rotate(132.88) scale(0.8800,1)">т</text><text transform="translate(870.32,482.91) rotate(134.74) scale(0.8800,1)">в</text><text transform="translate(866.62,486.51) rotate(136.80) scale(0.8800,1)">о</text><text transform="translate(862.63,490.12) rotate(138.94) scale(0.8800,1)">р</text><text transform="translate(858.56,493.54) rotate(141.05) scale(0.8800,1)">а</text><text transform="translate(852.16,498.42) rotate(144.25) scale(0.8800,1)">Т</text><text transform="translate(847.79,501.44) rotate(146.37) scale(0.8800,1)">е</text><text transform="translate(844.42,503.62) rotate(147.96) scale(0.8800,1)">.</text><text transform="translate(842.14,505.02) rotate(149.03) scale(0.8800,1)">.</text><text transform="translate(839.82,506.38) rotate(150.10) scale(0.8800,1)">.</text></g><g stroke="#4dc4fa" stroke-width="0.1"><text transform="translate(834.91,509.08) rotate(152.25) scale(0.8800,1)">Т</text><text transform="translate(829.31,511.87) rotate(154.74) scale(0.8800,1)">С</text><text transform="translate(823.60,514.42) rotate(157.22) scale(0.8800,1)">Т</text><text transform="translate(816.87,517.04) rotate(160.10) scale(0.8800,1)">(</text><text transform="translate(812.93,518.41) rotate(161.76) scale(0.8800,1)">Т</text><text transform="translate(807.99,519.94) rotate(163.82) scale(0.8800,1)">о</text><text transform="translate(802.94,521.30) rotate(165.89) scale(0.8800,1)">п</text><text transform="translate(797.65,522.53) rotate(168.06) scale(0.8800,1)">л</text><text transform="translate(792.27,523.56) rotate(170.23) scale(0.8800,1)">и</text><text transform="translate(787.10,524.35) rotate(172.32) scale(0.8800,1)">в</text><text transform="translate(783.20,524.82) rotate(173.88) scale(0.8800,1)">.</text><text transform="translate(780.55,525.08) rotate(174.94) scale(0.8800,1)">.</text><text transform="translate(777.91,525.29) rotate(175.99) scale(0.8800,1)">.</text></g><g stroke="#ff998c" stroke-width="0.1"><text transform="translate(773.59,525.51) rotate(177.80) scale(0.8800,1)">Д</text><text transform="translate(767.65,525.62) rotate(-179.84) scale(0.8800,1)">и</text><text transform="translate(762.85,525.52) rotate(-177.93) scale(0.8800,1)">з</text><text transform="translate(758.16,525.28) rotate(-176.06) scale(0.8800,1)">е</text><text transform="translate(752.85,524.81) rotate(-173.94) scale(0.8800,1)">л</text><text transform="translate(747.61,524.16) rotate(-171.84) scale(0.8800,1)">ь</text><text transform="translate(742.49,523.33) rotate(-169.77) scale(0.8800,1)">н</text><text transform="translate(737.28,522.29) rotate(-167.66) scale(0.8800,1)">о</text><text transform="translate(732.01,521.04) rotate(-165.51) scale(0.8800,1)">е</text><text transform="translate(724.69,518.93) rotate(-162.48) scale(0.8800,1)">т</text><text transform="translate(720.11,517.40) rotate(-160.55) scale(0.8800,1)">о</text><text transform="translate(715.22,515.58) rotate(-158.48) scale(0.8800,1)">п</text><text transform="translate(710.36,513.55) rotate(-156.38) scale(0.8800,1)">л</text><text transform="translate(705.43,511.28) rotate(-154.14) scale(0.8800,1)">и</text><text transform="translate(700.79,508.93) rotate(-152.07) scale(0.8800,1)">в</text><text transform="translate(696.26,506.42) rotate(-150.01) scale(0.8800,1)">о</text><text transform="translate(688.98,501.93) rotate(-146.61) scale(0.8800,1)">Е</text><text transform="translate(684.25,498.67) rotate(-144.32) scale(0.8800,1)">в</text><text transform="translate(680.06,495.54) rotate(-142.24) scale(0.8800,1)">р</text><text transform="translate(675.87,492.17) rotate(-140.10) scale(0.8800,1)">о</text><text transform="translate(672.85,489.58) rotate(-138.52) scale(0.8800,1)">,</text><text transform="translate(667.84,484.93) rotate(-135.80) scale(0.8800,1)">л</text><text transform="translate(663.99,481.04) rotate(-133.62) scale(0.8800,1)">е</text><text transform="translate(661.27,478.11) rotate(-132.03) scale(0.8800,1)">.</text><text transform="translate(659.49,476.10) rotate(-130.96) scale(0.8800,1)">.</text><text transform="translate(657.75,474.06) rotate(-129.90) scale(0.8800,1)">.</text></g><g stroke="#ff8a7e" stroke-width="0.1"><text transform="translate(654.36,469.94) rotate(-127.93) scale(0.8800,1)">М</text><text transform="translate(650.37,464.57) rotate(-125.26) scale(0.8800,1)">а</text><text transform="translate(647.70,460.66) rotate(-123.38) scale(0.8800,1)">з</text><text transform="translate(645.24,456.79) rotate(-121.56) scale(0.8800,1)">у</text><text transform="translate(642.89,452.83) rotate(-119.72) scale(0.8800,1)">т</text><text transform="translate(639.57,446.66) rotate(-116.93) scale(0.8800,1)">т</text><text transform="translate(637.45,442.30) rotate(-115.01) scale(0.8800,1)">о</text><text transform="translate(635.32,437.51) rotate(-112.92) scale(0.8800,1)">п</text><text transform="translate(633.38,432.69) rotate(-110.85) scale(0.8800,1)">о</text><text transform="translate(631.66,427.93) rotate(-108.84) scale(0.8800,1)">ч</text><text transform="translate(630.10,423.08) rotate(-106.83) scale(0.8800,1)">н</text><text transform="translate(628.47,417.23) rotate(-104.41) scale(0.8800,1)">ы</text><text transform="translate(627.06,411.21) rotate(-101.95) scale(0.8800,1)">й</text><text transform="translate(625.42,402.03) rotate(-98.24) scale(0.8800,1)">М</text><text transform="translate(624.73,396.46) rotate(-96.01) scale(0.8800,1)">-</text><text transform="translate(624.34,392.22) rotate(-94.31) scale(0.8800,1)">1</text><text transform="translate(624.04,386.86) rotate(-92.18) scale(0.8800,1)">0</text><text transform="translate(623.94,381.52) rotate(-90.05) scale(0.8800,1)">0</text><text transform="translate(624.09,374.85) rotate(-87.39) scale(0.8800,1)">.</text><text transform="translate(624.23,372.16) rotate(-86.32) scale(0.8800,1)">.</text><text transform="translate(624.43,369.49) rotate(-85.26) scale(0.8800,1)">.</text></g><g stroke="#aaa5f9" stroke-width="0.1"><text transform="translate(627.56,349.97) rotate(-77.36) scale(0.8800,1)">М</text><text transform="translate(629.18,343.46) rotate(-74.69) scale(0.8800,1)">а</text><text transform="translate(630.50,338.92) rotate(-72.81) scale(0.8800,1)">з</text><text transform="translate(631.94,334.51) rotate(-70.96) scale(0.8800,1)">у</text><text transform="translate(633.55,330.10) rotate(-69.10) scale(0.8800,1)">т</text><text transform="translate(636.23,323.57) rotate(-66.29) scale(0.8800,1)">т</text><text transform="translate(638.22,319.23) rotate(-64.39) scale(0.8800,1)">о</text><text transform="translate(640.53,314.62) rotate(-62.34) scale(0.8800,1)">п</text><text transform="translate(642.98,310.17) rotate(-60.19) scale(0.8800,1)">о</text><text transform="translate(645.57,305.81) rotate(-58.17) scale(0.8800,1)">ч</text><text transform="translate(648.39,301.46) rotate(-56.11) scale(0.8800,1)">н</text><text transform="translate(651.88,296.48) rotate(-53.69) scale(0.8800,1)">ы</text><text transform="translate(655.65,291.59) rotate(-51.23) scale(0.8800,1)">й</text><text transform="translate(660.82,285.50) rotate(-48.05) scale(0.8800,1)">4</text><text transform="translate(664.50,281.56) rotate(-45.91) scale(0.8800,1)">0</text></g><g stroke="#ffc107" stroke-width="0.1"><text transform="translate(679.47,268.02) rotate(-37.94) scale(0.8800,1)">Т</text><text transform="translate(683.72,264.83) rotate(-35.82) scale(0.8800,1)">р</text><text transform="translate(688.14,261.77) rotate(-33.68) scale(0.8800,1)">а</text><text transform="translate(692.61,258.91) rotate(-31.57) scale(0.8800,1)">н</text><text transform="translate(696.98,256.33) rotate(-29.55) scale(0.8800,1)">с</text><text transform="translate(701.38,253.93) rotate(-27.56) scale(0.8800,1)">п</text><text transform="translate(706.02,251.61) rotate(-25.60) scale(0.8800,1)">о</text><text transform="translate(710.68,249.48) rotate(-23.57) scale(0.8800,1)">р</text><text transform="translate(715.03,247.67) rotate(-21.69) scale(0.8800,1)">т</text><text transform="translate(719.59,245.95) rotate(-19.75) scale(0.8800,1)">н</text><text transform="translate(725.48,243.97) rotate(-17.28) scale(0.8800,1)">ы</text><text transform="translate(730.18,242.60) rotate(-15.33) scale(0.8800,1)">.</text><text transform="translate(732.74,241.92) rotate(-14.28) scale(0.8800,1)">.</text><text transform="translate(735.32,241.29) rotate(-13.22) scale(0.8800,1)">.</text></g><g stroke="#62c472" stroke-width="0.1"><text transform="translate(739.69,240.41) rotate(-11.30) scale(0.8800,1)">А</text><text transform="translate(745.52,239.37) rotate(-8.95) scale(0.8800,1)">р</text><text transform="translate(750.77,238.64) rotate(-6.84) scale(0.8800,1)">е</text><text transform="translate(756.01,238.11) rotate(-4.71) scale(0.8800,1)">н</text><text transform="translate(759.99,237.84) rotate(-3.13) scale(0.8800,1)">.</text><text transform="translate(762.68,237.71) rotate(-2.05) scale(0.8800,1)">.</text><text transform="translate(765.37,237.64) rotate(-0.98) scale(0.8800,1)">.</text></g></g></svg>
<div class="a" style="left:607.5px;top:152.80px;width:13.6px;height:13px;background:#4dc4fa"></div>
<div class="t " style="left:623.30px;top:153.79px;font-size:12.444px;color:#333;transform:scaleX(0.9434);">19.20.1 Производство жидкого топлива</div>
<div class="a" style="left:607.5px;top:167.80px;width:13.6px;height:13px;background:#ff8a7e"></div>
<div class="t " style="left:623.30px;top:168.79px;font-size:12.444px;color:#333;transform:scaleX(0.9434);">46.90 Торговля оптовая неспециализированная</div>
<div class="a" style="left:607.5px;top:182.80px;width:13.6px;height:13px;background:#aaa5f9"></div>
<div class="t " style="left:623.30px;top:183.79px;font-size:12.444px;color:#333;transform:scaleX(0.9434);">46.12.1 Деятельность агентов по оптовой торговле тв<span style="letter-spacing:0.6px">…</span></div>
<div class="a" style="left:607.5px;top:197.80px;width:13.6px;height:13px;background:#ffc107"></div>
<div class="t " style="left:623.30px;top:198.79px;font-size:12.444px;color:#333;transform:scaleX(0.9434);">49.41.1 Перевозка грузов специализированными авто<span style="letter-spacing:0.6px">…</span></div>
<div class="a" style="left:607.5px;top:212.80px;width:13.6px;height:13px;background:#62c472"></div>
<div class="t " style="left:623.30px;top:213.79px;font-size:12.444px;color:#333;transform:scaleX(0.9434);">77.12 Аренда и лизинг грузовых транспортных средств</div>
<svg class="a" style="left:944px;top:156px" width="7" height="9" viewBox="0 0 7 9"><path d="M1.5,1L5.5,4.5L1.5,8" stroke="#444" stroke-width="1.2" fill="none"/></svg>
<div class="a" style="left:107px;top:235.5px;width:412.5px;height:277px;background:#fff;border:1px solid #c2c2c2;box-shadow:1px 1px 2px rgba(0,0,0,.18)"></div>
<div class="a" style="left:108px;top:303.5px;width:410.5px;height:21.7px;background:#fbcb26"></div>
<div class="a" style="left:108px;top:372px;width:410.5px;height:1px;background:#e3ddd0"></div>
<div class="a" style="left:108px;top:442.5px;width:410.5px;height:1px;background:#e3ddd0"></div>
<div class="t " style="left:140.30px;top:241.49px;font-size:11.002px;color:#444;transform:scaleX(0.8726);">Изменить код ОКВЭД</div>
<div class="t " style="left:97.30px;width:400px;text-align:right;top:241.49px;font-size:11.002px;color:#a0a0a0;transform:scaleX(0.8726);transform-origin:100% 0;">F4</div>
<svg class="a" style="left:119px;top:241.5px" width="12" height="12" viewBox="0 0 12 12"><path d="M8.2,1.6L10.4,3.8L4.6,9.6L2.4,7.4Z" fill="#4fb34f" stroke="#2f6f2f" stroke-width="0.7"/><path d="M8.2,1.6L9.3,0.5L11.5,2.7L10.4,3.8Z" fill="#3a3a3a"/><path d="M2.4,7.4L4.6,9.6L1.2,10.8Z" fill="#f5a623" stroke="#9a6a20" stroke-width="0.4"/><path d="M1.2,10.8L1.7,9.3L2.7,10.3Z" fill="#222"/></svg>
<div class="t " style="left:140.30px;top:263.59px;font-size:11.002px;color:#444;transform:scaleX(0.8726);">Установить отбор</div>
<div class="t " style="left:97.30px;width:400px;text-align:right;top:263.59px;font-size:11.002px;color:#a0a0a0;transform:scaleX(0.8726);transform-origin:100% 0;">Ctrl+S</div>
<svg class="a" style="left:119.5px;top:264.5px" width="11" height="10" viewBox="0 0 11 10"><path d="M0.5,0.5H10.5L6.5,4.5V9.5L4.5,8.5V4.5Z" fill="#dfe6ee" stroke="#8c9aa8" stroke-width="0.9"/></svg>
<div class="t " style="left:140.30px;top:285.79px;font-size:11.002px;color:#a8a8a8;transform:scaleX(0.8726);">Отменить отбор</div>
<div class="t " style="left:97.30px;width:400px;text-align:right;top:285.79px;font-size:11.002px;color:#a0a0a0;transform:scaleX(0.8726);transform-origin:100% 0;">Ctrl+Z</div>
<svg class="a" style="left:121.5px;top:288.3px" width="7" height="7" viewBox="0 0 7 7"><path d="M0.8,0.8L6,6M6,0.8L0.8,6" stroke="#a0a0a0" stroke-width="0.9"/></svg>
<div class="t " style="left:140.30px;top:307.99px;font-size:11.002px;color:#444;transform:scaleX(0.8726);">Открыть Номенклатурная группа / Номенклатура</div>
<div class="t " style="left:97.30px;width:400px;text-align:right;top:307.99px;font-size:11.002px;color:#b39a45;transform:scaleX(0.8726);transform-origin:100% 0;">Ctrl+Shift+F4</div>
<div class="t " style="left:140.30px;top:330.79px;font-size:11.002px;color:#444;transform:scaleX(0.8726);">ОСВ по счету 90.01</div>
<div class="t " style="left:140.30px;top:353.19px;font-size:11.002px;color:#444;transform:scaleX(0.8726);">Анализ субконто по номенклатуре</div>
<div class="t " style="left:140.30px;top:378.39px;font-size:11.002px;color:#444;transform:scaleX(0.8726);">Найти: Номенклатурная группа / Номенклатура - Техно РО</div>
<div class="t " style="left:97.30px;width:400px;text-align:right;top:378.39px;font-size:11.002px;color:#a0a0a0;transform:scaleX(0.8726);transform-origin:100% 0;">Ctrl+Alt+F</div>
<div class="t " style="left:140.30px;top:400.99px;font-size:11.002px;color:#444;transform:scaleX(0.8726);">Расширенный поиск</div>
<div class="t " style="left:97.30px;width:400px;text-align:right;top:400.99px;font-size:11.002px;color:#a0a0a0;transform:scaleX(0.8726);transform-origin:100% 0;">Alt+F</div>
<svg class="a" style="left:118.5px;top:401.5px" width="12" height="11" viewBox="0 0 12 11"><circle cx="6.3" cy="4.3" r="3" fill="none" stroke="#2c6fb5" stroke-width="1.4"/><path d="M8.5,6.5L11,9" stroke="#2c6fb5" stroke-width="1.6"/><path d="M0.5,10H5.5" stroke="#2c6fb5" stroke-width="1" stroke-dasharray="1,1"/></svg>
<div class="t " style="left:140.30px;top:423.79px;font-size:11.002px;color:#a8a8a8;transform:scaleX(0.8726);">Отменить поиск</div>
<div class="t " style="left:97.30px;width:400px;text-align:right;top:423.79px;font-size:11.002px;color:#a0a0a0;transform:scaleX(0.8726);transform-origin:100% 0;">Ctrl+Q</div>
<svg class="a" style="left:118.5px;top:423.5px" width="12" height="11" viewBox="0 0 12 11"><circle cx="6.3" cy="4.3" r="3" fill="none" stroke="#b8b8b8" stroke-width="1.4"/><path d="M8.5,6.5L11,9" stroke="#b8b8b8" stroke-width="1.6"/><path d="M0.8,7.2L3.8,10.2M3.8,7.2L0.8,10.2" stroke="#d08080" stroke-width="1"/></svg>
<div class="t " style="left:140.30px;top:448.89px;font-size:11.002px;color:#444;transform:scaleX(0.8726);">Копировать</div>
<div class="t " style="left:97.30px;width:400px;text-align:right;top:448.89px;font-size:11.002px;color:#a0a0a0;transform:scaleX(0.8726);transform-origin:100% 0;">Ctrl+C</div>
<svg class="a" style="left:118.5px;top:449px" width="12" height="11" viewBox="0 0 12 11"><path d="M0.5,0.5H4.5L6,2V7.5H0.5Z" fill="#f4f6f8" stroke="#8a96a0" stroke-width="0.8"/><path d="M4.5,3.5H8.8L10.8,5.5V10.5H4.5Z" fill="#e6ebef" stroke="#8a96a0" stroke-width="0.8"/><path d="M1.8,2.5V6M6,6V9.5M7.8,6V9.5M9.6,7V9.5" stroke="#b0bac2" stroke-width="0.6"/></svg>
<div class="t " style="left:140.30px;top:471.19px;font-size:11.002px;color:#444;transform:scaleX(0.8726);">Выделить все</div>
<div class="t " style="left:97.30px;width:400px;text-align:right;top:471.19px;font-size:11.002px;color:#a0a0a0;transform:scaleX(0.8726);transform-origin:100% 0;">Ctrl+A</div>
<div class="t " style="left:140.30px;top:493.29px;font-size:11.002px;color:#444;transform:scaleX(0.8726);">Искать везде "Техно РО"</div>
<div class="t " style="left:97.30px;width:400px;text-align:right;top:493.29px;font-size:11.002px;color:#a0a0a0;transform:scaleX(0.8726);transform-origin:100% 0;">Alt+L</div>
</body></html>
